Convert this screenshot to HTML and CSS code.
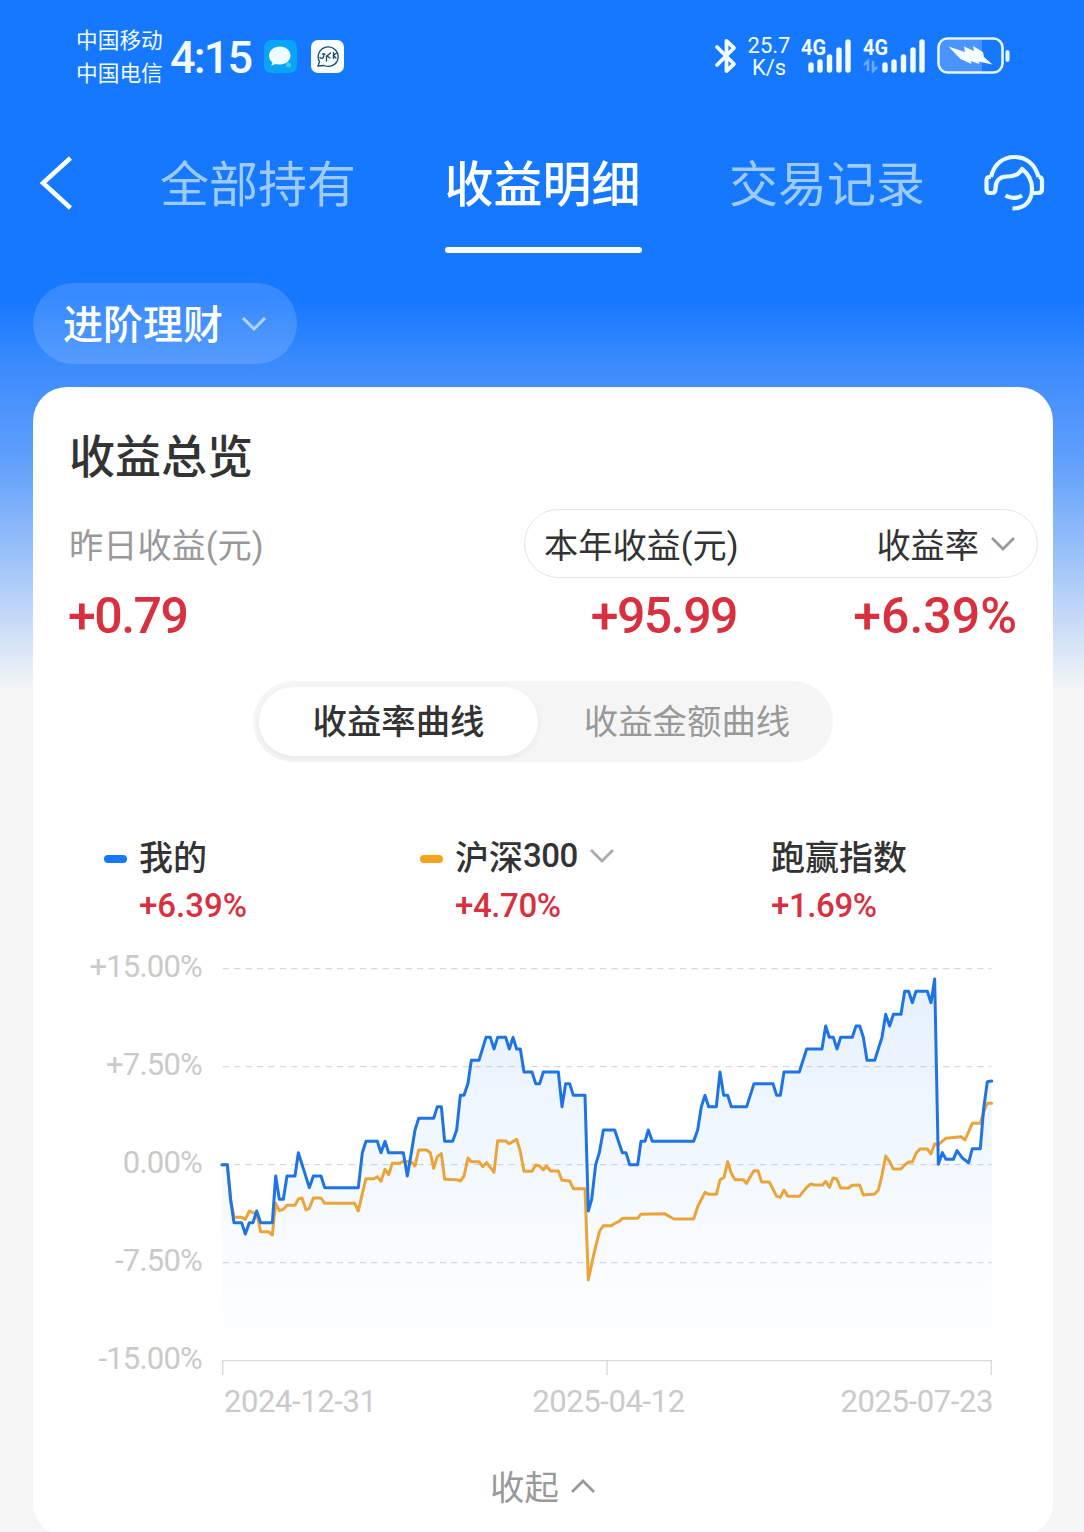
FILE: index.html
```html
<!DOCTYPE html>
<html lang="zh-CN">
<head>
    <meta charset="UTF-8">
    <meta name="viewport" content="width=device-width, initial-scale=1.0">
    <title>收益明细</title>
    <link rel="stylesheet" href="styles.css">
</head>
<body>
    <!-- STATUS BAR -->
    <div class="status-bar">
        <div class="carriers">
            <span>中国移动</span>
            <span>中国电信</span>
        </div>
        <span class="clock">4:15</span>
        <svg class="app-icon" viewBox="0 0 33 33">
            <rect width="33" height="33" rx="7" fill="#08a4f5"/>
            <path d="M16 6.500c-6.200 0-11 4-11 9 0 3.200 1.500 5.600 3.500 7.200l-1.300 3 4.600-1.600c1.300.400 2.700.500 4.200.500 6 0 10.500-4 10.500-9s-4.500-9.100-10.500-9.100z" fill="#effcff"/>
            <circle cx="24.500" cy="25" r="2.500" fill="#45c5fa"/>
        </svg>
        <svg class="app-icon second" viewBox="0 0 33 33">
            <rect width="33" height="33" rx="7" fill="#f7feff"/>
            <g fill="none" stroke="#1c4b62" stroke-width="1.300" stroke-linecap="round">
                <path d="M8.500 21.500A10 9.700 0 1 1 13 25.500L7 26z"/>
                <path d="M9 17.500c2 2 4 .500 4-3.500M15.500 16v5M19.500 13l-3.500 3 3 2M22.500 12.500v6M25.500 13l-3 2.500 2.500 2.500M11.500 14h2.500"/>
            </g>
        </svg>
        <div class="status-right">
            <svg width="24" height="36" viewBox="0 0 24 36" fill="none" stroke="#f2fcff" stroke-width="3.800" stroke-linejoin="round" stroke-linecap="round">
                <path d="M3 9l17 17-7.500 7V3l7.500 7L3 27"/>
            </svg>
            <div class="speed">
                <span>25.7</span>
                <span>K/s</span>
            </div>
            <svg class="signal" width="52" height="50" viewBox="0 -6 52 50">
                <text class="net" x="1" y="18" textLength="25" lengthAdjust="spacingAndGlyphs">4G</text>
                <g stroke="#f2fcff" stroke-width="5.400" stroke-linecap="round">
                    <path d="M11 28v5M20 25v8M29.500 20v13M39 13v20M48 5v28"/>
                </g>
            </svg>
            <svg class="signal two" width="64" height="50" viewBox="0 -6 64 50">
                <text class="net" x="1" y="18" textLength="25" lengthAdjust="spacingAndGlyphs">4G</text>
                <path d="M6 34V24l-4 4M11 24v10l4-4" fill="none" stroke="#69a8ff" stroke-width="2.500"/>
                <g stroke="#f2fcff" stroke-width="5.400" stroke-linecap="round">
                    <path d="M23 28v5M32 25v8M41.500 20v13M51 13v20M60 5v28"/>
                </g>
            </svg>
            <svg class="battery" width="74" height="38" viewBox="0 0 74 38">
                <path d="M12 3h33v32H12q-9 0-9-9V12q0-9 9-9z" fill="#4b94ff"/>
                <rect x="1.500" y="1.500" width="64" height="34" rx="9" fill="none" stroke="#e4f6ff" stroke-width="2.600"/>
                <path d="M70.500 15v8" stroke="#e4f6ff" stroke-width="4" stroke-linecap="round"/>
                <path d="M11.500 9.500L28 15l-1-5.500 10 4.500-1-5 10 6 1 5 8.500 7.500-14-3 1 2.500-9-3 1 3-11-5z" fill="#f5fdff"/>
            </svg>
        </div>
    </div>

    <!-- NAV -->
    <div class="nav">
        <svg class="back" width="34" height="56" viewBox="0 0 34 56" fill="none" stroke="#ffffff" stroke-width="4.500">
            <path d="M31.500 3L4 28l27.500 25"/>
        </svg>
        <div class="tabs">
            <span class="tab">全部持有</span>
            <span class="tab active">收益明细</span>
            <span class="tab">交易记录</span>
        </div>
        <svg class="service" width="62" height="60" viewBox="0 0 62 60" fill="none" stroke="#e8faff" stroke-width="4.200" stroke-linejoin="round">
            <path d="M7 24C10 11 19 4 30.500 4S51 11 54.500 24"/>
            <path d="M7 24H5.500Q2.500 24 2.500 27.500v8.500q0 4 3.500 4h2q3.500 0 3.500-4C11.500 27 16 23.500 23 23.500c7 0 12-1.500 15-7.500 6.500 5 10 12 10 20 0 12-7 19.500-19.500 19.500"/>
            <path d="M48 40h6q4 0 4-4v-8.500q0-3.500-3.500-3.500"/>
            <path d="M21.500 42.500c5 3 11.500 3 16.500 0"/>
        </svg>
    </div>

    <div class="filter">
        <span>进阶理财</span>
        <svg width="26" height="16" viewBox="0 0 26 16" fill="none" stroke="#b5d5ff" stroke-width="3">
            <path d="M2 2l11 11L24 2"/>
        </svg>
    </div>

    <!-- OVERVIEW CARD -->
    <div class="card">
        <h2>收益总览</h2>
        <div class="stat-labels">
            <span class="label">昨日收益(元)</span>
            <div class="period">
                <span>本年收益(元)</span>
                <span class="rate">收益率
                    <svg width="26" height="16" viewBox="0 0 26 16" fill="none" stroke="#999999" stroke-width="2.800">
                        <path d="M2 3l11 11L24 3"/>
                    </svg>
                </span>
            </div>
        </div>
        <div class="stat-values">
            <span class="tight">+0.79</span>
            <span class="tight">+95.99</span>
            <span>+6.39%</span>
        </div>

        <div class="switch">
            <span class="on">收益率曲线</span>
            <span class="off">收益金额曲线</span>
        </div>

        <div class="legend">
            <div class="item">
                <i class="mark blue"></i>
                <div>
                    <p class="name">我的</p>
                    <p class="value">+6.39%</p>
                </div>
            </div>
            <div class="item">
                <i class="mark orange"></i>
                <div>
                    <p class="name">沪深<b>300</b>
                        <svg width="26" height="16" viewBox="0 0 26 16" fill="none" stroke="#aaaaaa" stroke-width="2.800">
                            <path d="M2 3l11 11L24 3"/>
                        </svg>
                    </p>
                    <p class="value small">+4.70%</p>
                </div>
            </div>
            <div class="item">
                <div>
                    <p class="name">跑赢指数</p>
                    <p class="value small">+1.69%</p>
                </div>
            </div>
        </div>

        <!-- CHART -->
        <div class="chart">
            <div class="y-axis">
                <span>+15.00%</span>
                <span>+7.50%</span>
                <span>0.00%</span>
                <span>-7.50%</span>
                <span>-15.00%</span>
            </div>
            <svg class="plot" width="790" height="430" viewBox="0 0 2370 1290">
                <defs>
                    <linearGradient id="area" gradientUnits="userSpaceOnUse" x1="0" y1="87" x2="0" y2="1232">
                        <stop offset="0" stop-color="#1677e6" stop-opacity="0.110"/>
                        <stop offset="0.450" stop-color="#1f88ff" stop-opacity="0.060"/>
                        <stop offset="0.750" stop-color="#1f88ff" stop-opacity="0.025"/>
                        <stop offset="1" stop-color="#1f88ff" stop-opacity="0"/>
                    </linearGradient>
                </defs>
                <path class="grid" d="M38 56H2345M38 350H2345M38 644H2345M38 938H2345"/>
                <path class="axis" d="M38 1275V1232H2344V1275M1191 1232V1275"/>
                <path fill="url(#area)" d="M36 644 52 644 62 750 72 818 95 818 106 852 118 818 129 818 140 783 152 818 187 818 197 678 208 748 220 748 231 678 255 678 265 608 298 713 310 678 333 678 344 713 445 713 457 608 468 574 502 574 513 608 525 574 536 608 580 608 592 678 604 608 615 540 626 505 671 505 682 470 694 470 704 574 728 574 740 540 751 436 762 436 774 400 784 331 807 331 828 262 841 262 852 297 863 262 887 262 898 297 909 262 920 297 931 297 942 366 966 366 977 401 989 401 1000 366 1045 366 1056 470 1067 401 1079 401 1090 436 1125 436 1135 783 1145 748 1157 644 1168 608 1180 540 1214 540 1237 608 1248 608 1259 644 1283 644 1293 574 1305 574 1315 540 1327 574 1451 574 1463 540 1474 470 1485 436 1496 470 1519 470 1530 366 1541 436 1553 436 1564 470 1610 470 1632 401 1689 401 1700 436 1711 436 1722 366 1768 366 1790 297 1836 297 1847 228 1858 262 1870 262 1881 297 1892 262 1927 262 1938 228 1949 228 1960 262 1971 331 1994 331 2016 262 2027 193 2039 228 2050 193 2073 193 2084 124 2096 124 2107 158 2118 124 2152 124 2163 158 2174 87 2185 643 2197 608 2208 628 2230 628 2241 602 2258 625 2276 638 2287 596 2311 596 2321 475 2332 395 2345 393V1232H36z"/>
                <path class="line index" d="M36 644 52 644 62 750 72 802 95 802 106 808 118 783 129 788 140 790 152 845 175 845 187 855 197 760 208 782 220 778 231 766 255 766 265 747 276 744 288 780 298 775 310 744 333 744 344 760 434 760 445 783 457 730 468 686 492 686 502 680 513 694 525 658 536 674 547 640 570 640 580 634 604 636 615 648 626 600 650 600 661 608 671 655 682 620 694 611 704 688 740 689 751 693 762 678 774 624 784 635 807 635 818 650 830 638 852 667 863 572 887 573 898 581 920 568 931 605 942 664 966 664 977 645 989 648 1000 660 1009 648 1022 663 1045 663 1056 691 1079 693 1090 716 1125 716 1135 990 1148 928 1157 890 1169 843 1180 827 1204 827 1216 819 1227 815 1237 805 1283 805 1293 793 1363 791 1392 807 1451 807 1463 770 1485 727 1497 733 1519 733 1530 690 1542 682 1553 635 1564 670 1575 689 1599 689 1610 700 1622 678 1632 662 1644 662 1655 696 1678 696 1700 739 1711 742 1722 720 1734 739 1768 739 1790 712 1802 702 1813 705 1838 705 1847 694 1859 712 1869 684 1880 686 1892 714 1916 714 1926 706 1949 705 1960 735 1994 732 2005 720 2015 680 2027 618 2039 635 2050 657 2073 657 2084 645 2096 636 2107 636 2118 610 2130 597 2152 597 2163 612 2174 582 2185 584 2207 565 2253 560 2265 570 2287 520 2311 520 2321 485 2332 460 2345 460"/>
                <path class="line mine" d="M36 644 52 644 62 750 72 818 95 818 106 852 118 818 129 818 140 783 152 818 187 818 197 678 208 748 220 748 231 678 255 678 265 608 298 713 310 678 333 678 344 713 445 713 457 608 468 574 502 574 513 608 525 574 536 608 580 608 592 678 604 608 615 540 626 505 671 505 682 470 694 470 704 574 728 574 740 540 751 436 762 436 774 400 784 331 807 331 828 262 841 262 852 297 863 262 887 262 898 297 909 262 920 297 931 297 942 366 966 366 977 401 989 401 1000 366 1045 366 1056 470 1067 401 1079 401 1090 436 1125 436 1135 783 1145 748 1157 644 1168 608 1180 540 1214 540 1237 608 1248 608 1259 644 1283 644 1293 574 1305 574 1315 540 1327 574 1451 574 1463 540 1474 470 1485 436 1496 470 1519 470 1530 366 1541 436 1553 436 1564 470 1610 470 1632 401 1689 401 1700 436 1711 436 1722 366 1768 366 1790 297 1836 297 1847 228 1858 262 1870 262 1881 297 1892 262 1927 262 1938 228 1949 228 1960 262 1971 331 1994 331 2016 262 2027 193 2039 228 2050 193 2073 193 2084 124 2096 124 2107 158 2118 124 2152 124 2163 158 2174 87 2185 643 2197 608 2208 628 2230 628 2241 602 2258 625 2276 638 2287 596 2311 596 2321 475 2332 395 2345 393"/>
            </svg>
        </div>
        <div class="x-axis">
            <span>2024-12-31</span>
            <span>2025-04-12</span>
            <span>2025-07-23</span>
        </div>

        <div class="collapse">
            <span>收起</span>
            <svg width="26" height="16" viewBox="0 0 26 16" fill="none" stroke="#999999" stroke-width="2.800">
                <path d="M2 14L13 3l11 11"/>
            </svg>
        </div>
    </div>
</body>
</html>
```

FILE: styles.css
```css
* {
    box-sizing: border-box;
}
body {
    margin: 0;
    height: 1532px;
    overflow: hidden;
    font-family: Roboto, "Noto Sans CJK SC", sans-serif;
    color: #333333;
    background: #f5f5f5 linear-gradient(#1677ff 0, #1677ff 300px, #3b8bfd 365px, #609ffb 460px, #a4c7f9 570px, #f5f5f5 690px) no-repeat;
}
h2, p {
    margin: 0;
}
svg {
    display: block;
    flex: none;
}

/* status bar */
.status-bar {
    display: flex;
    align-items: center;
    height: 112px;
    padding: 0 73px 0 76px;
    color: #f2fcff;
}
.carriers {
    display: flex;
    flex-direction: column;
    width: 88px;
    padding-top: 1px;
    font-size: 21.7px;
    line-height: 33px;
}
.clock {
    width: 84px;
    margin: 3px 0 0 6px;
    font-size: 45px;
    font-weight: 500;
    line-height: 50px;
    letter-spacing: -1.8px;
}
.app-icon {
    width: 33px;
    height: 33px;
    margin-left: 10px;
}
.app-icon.second {
    margin-left: 14px;
}
.status-right {
    display: flex;
    align-items: center;
    margin-left: auto;
}
.speed {
    display: flex;
    flex-direction: column;
    width: 44px;
    margin: 2px 0 0 9px;
    font-size: 22px;
    line-height: 22px;
    text-align: center;
}
.speed span {
    height: 22px;
}
.signal {
    margin-left: 9px;
}
.signal.two {
    margin-left: 10px;
}
.net {
    font-size: 22px;
    font-weight: 700;
    fill: #f2fcff;
}
.battery {
    margin-left: 11px;
}

/* nav */
.nav {
    display: flex;
    align-items: center;
    height: 142px;
    padding-left: 39px;
}
.tabs {
    display: flex;
    gap: 88.5px;
    margin-left: 87px;
}
.tab {
    position: relative;
    width: 196px;
    height: 142px;
    padding-top: 3px;
    font-size: 49px;
    line-height: 142px;
    color: #9dcbff;
    white-space: nowrap;
}
.tab.active {
    font-weight: 500;
    color: #ffffff;
}
.tab.active::after {
    content: "";
    position: absolute;
    left: 0;
    bottom: 1px;
    width: 197px;
    height: 6px;
    border-radius: 3px;
    background: #ffffff;
}
.service {
    margin-left: 59px;
}

.filter {
    display: flex;
    align-items: center;
    gap: 18px;
    width: 264px;
    height: 81px;
    margin: 29px 0 23px 33px;
    padding-left: 30px;
    border-radius: 41px;
    font-size: 40px;
    font-weight: 500;
    color: #ffffff;
    background: rgba(255, 255, 255, 0.15);
}
.filter span {
    padding-bottom: 3px;
}

/* card */
.card {
    width: 1020px;
    height: 1150px;
    margin-left: 33px;
    padding-top: 36px;
    border-radius: 34px;
    background: #ffffff;
}
h2 {
    padding-left: 36px;
    font-size: 46px;
    font-weight: 500;
    line-height: 68px;
}
.stat-labels {
    display: flex;
    align-items: center;
    justify-content: space-between;
    height: 69px;
    margin-top: 18px;
    padding: 0 15px 0 36px;
    font-size: 34.200px;
}
.label {
    padding-bottom: 2px;
    color: #999999;
}
.period {
    display: flex;
    align-items: center;
    justify-content: space-between;
    width: 514px;
    height: 69px;
    padding: 0 21px 2px 19px;
    border: 1px solid #e5e5e5;
    border-radius: 35px;
}
.rate {
    display: flex;
    align-items: center;
    gap: 11px;
}
.stat-values {
    display: grid;
    grid-template-columns: 300px 1fr 280px;
    padding: 0 36px 0 35px;
    font-size: 50px;
    font-weight: 500;
    line-height: 76px;
    color: #d9303f;
}
.stat-values span + span {
    text-align: right;
}
.tight {
    letter-spacing: -1.5px;
}
.switch {
    display: flex;
    align-items: center;
    width: 580px;
    height: 81px;
    margin: 27px 0 0 220px;
    padding: 0 6px;
    border-radius: 41px;
    font-size: 34.400px;
    color: #999999;
    background: #f5f5f5;
}
.switch span {
    height: 69px;
    line-height: 70px;
    text-align: center;
}
.switch .on {
    width: 279px;
    border-radius: 35px;
    font-weight: 500;
    color: #333333;
    background: #ffffff;
    box-shadow: 0 2px 6px rgba(0, 0, 0, 0.06);
}
.switch .off {
    flex: 1;
    padding-left: 9px;
}

/* legend */
.legend {
    display: grid;
    grid-template-columns: 316px 351px 1fr;
    margin-top: 67px;
    padding-left: 71px;
}
.item {
    display: flex;
}
.mark {
    width: 23px;
    height: 8px;
    margin: 26px 12px 0 0;
    border-radius: 4px;
}
.blue {
    background: #1677ff;
}
.orange {
    background: #f7a21b;
}
.name {
    display: flex;
    align-items: center;
    height: 52px;
    font-size: 34px;
    font-weight: 500;
}
.name b {
    font-size: 33px;
    font-weight: 500;
    letter-spacing: -0.5px;
}
.name svg {
    margin-left: 11px;
}
.value {
    font-size: 33px;
    font-weight: 500;
    line-height: 50px;
    color: #d9303f;
}
.value.small {
    letter-spacing: -0.4px;
}

/* chart */
.chart {
    display: flex;
    height: 430px;
    margin-top: 19px;
}
.y-axis {
    width: 169px;
    margin: -32px 8px 0 0;
    font-size: 31px;
    line-height: 98px;
    letter-spacing: -0.8px;
    text-align: right;
    color: #cacaca;
}
.y-axis span {
    display: block;
}
.grid {
    fill: none;
    stroke: #d9d9d9;
    stroke-width: 4;
    stroke-dasharray: 19 15.300;
}
.axis {
    fill: none;
    stroke: #d9d9d9;
    stroke-width: 4;
}
.line {
    fill: none;
    stroke-width: 9;
    stroke-linejoin: round;
    stroke-linecap: round;
}
.line.mine {
    stroke: #1f74e5;
}
.line.index {
    stroke: #eba43a;
}
.x-axis {
    display: flex;
    justify-content: space-between;
    padding: 1px 60px 0 191px;
    font-size: 31px;
    line-height: 42px;
    letter-spacing: -0.4px;
    color: #cacaca;
}
.collapse {
    display: flex;
    align-items: center;
    justify-content: center;
    gap: 11px;
    height: 60px;
    margin-top: 33px;
    font-size: 34.400px;
    color: #999999;
}
.collapse span {
    padding-bottom: 2px;
}
```
